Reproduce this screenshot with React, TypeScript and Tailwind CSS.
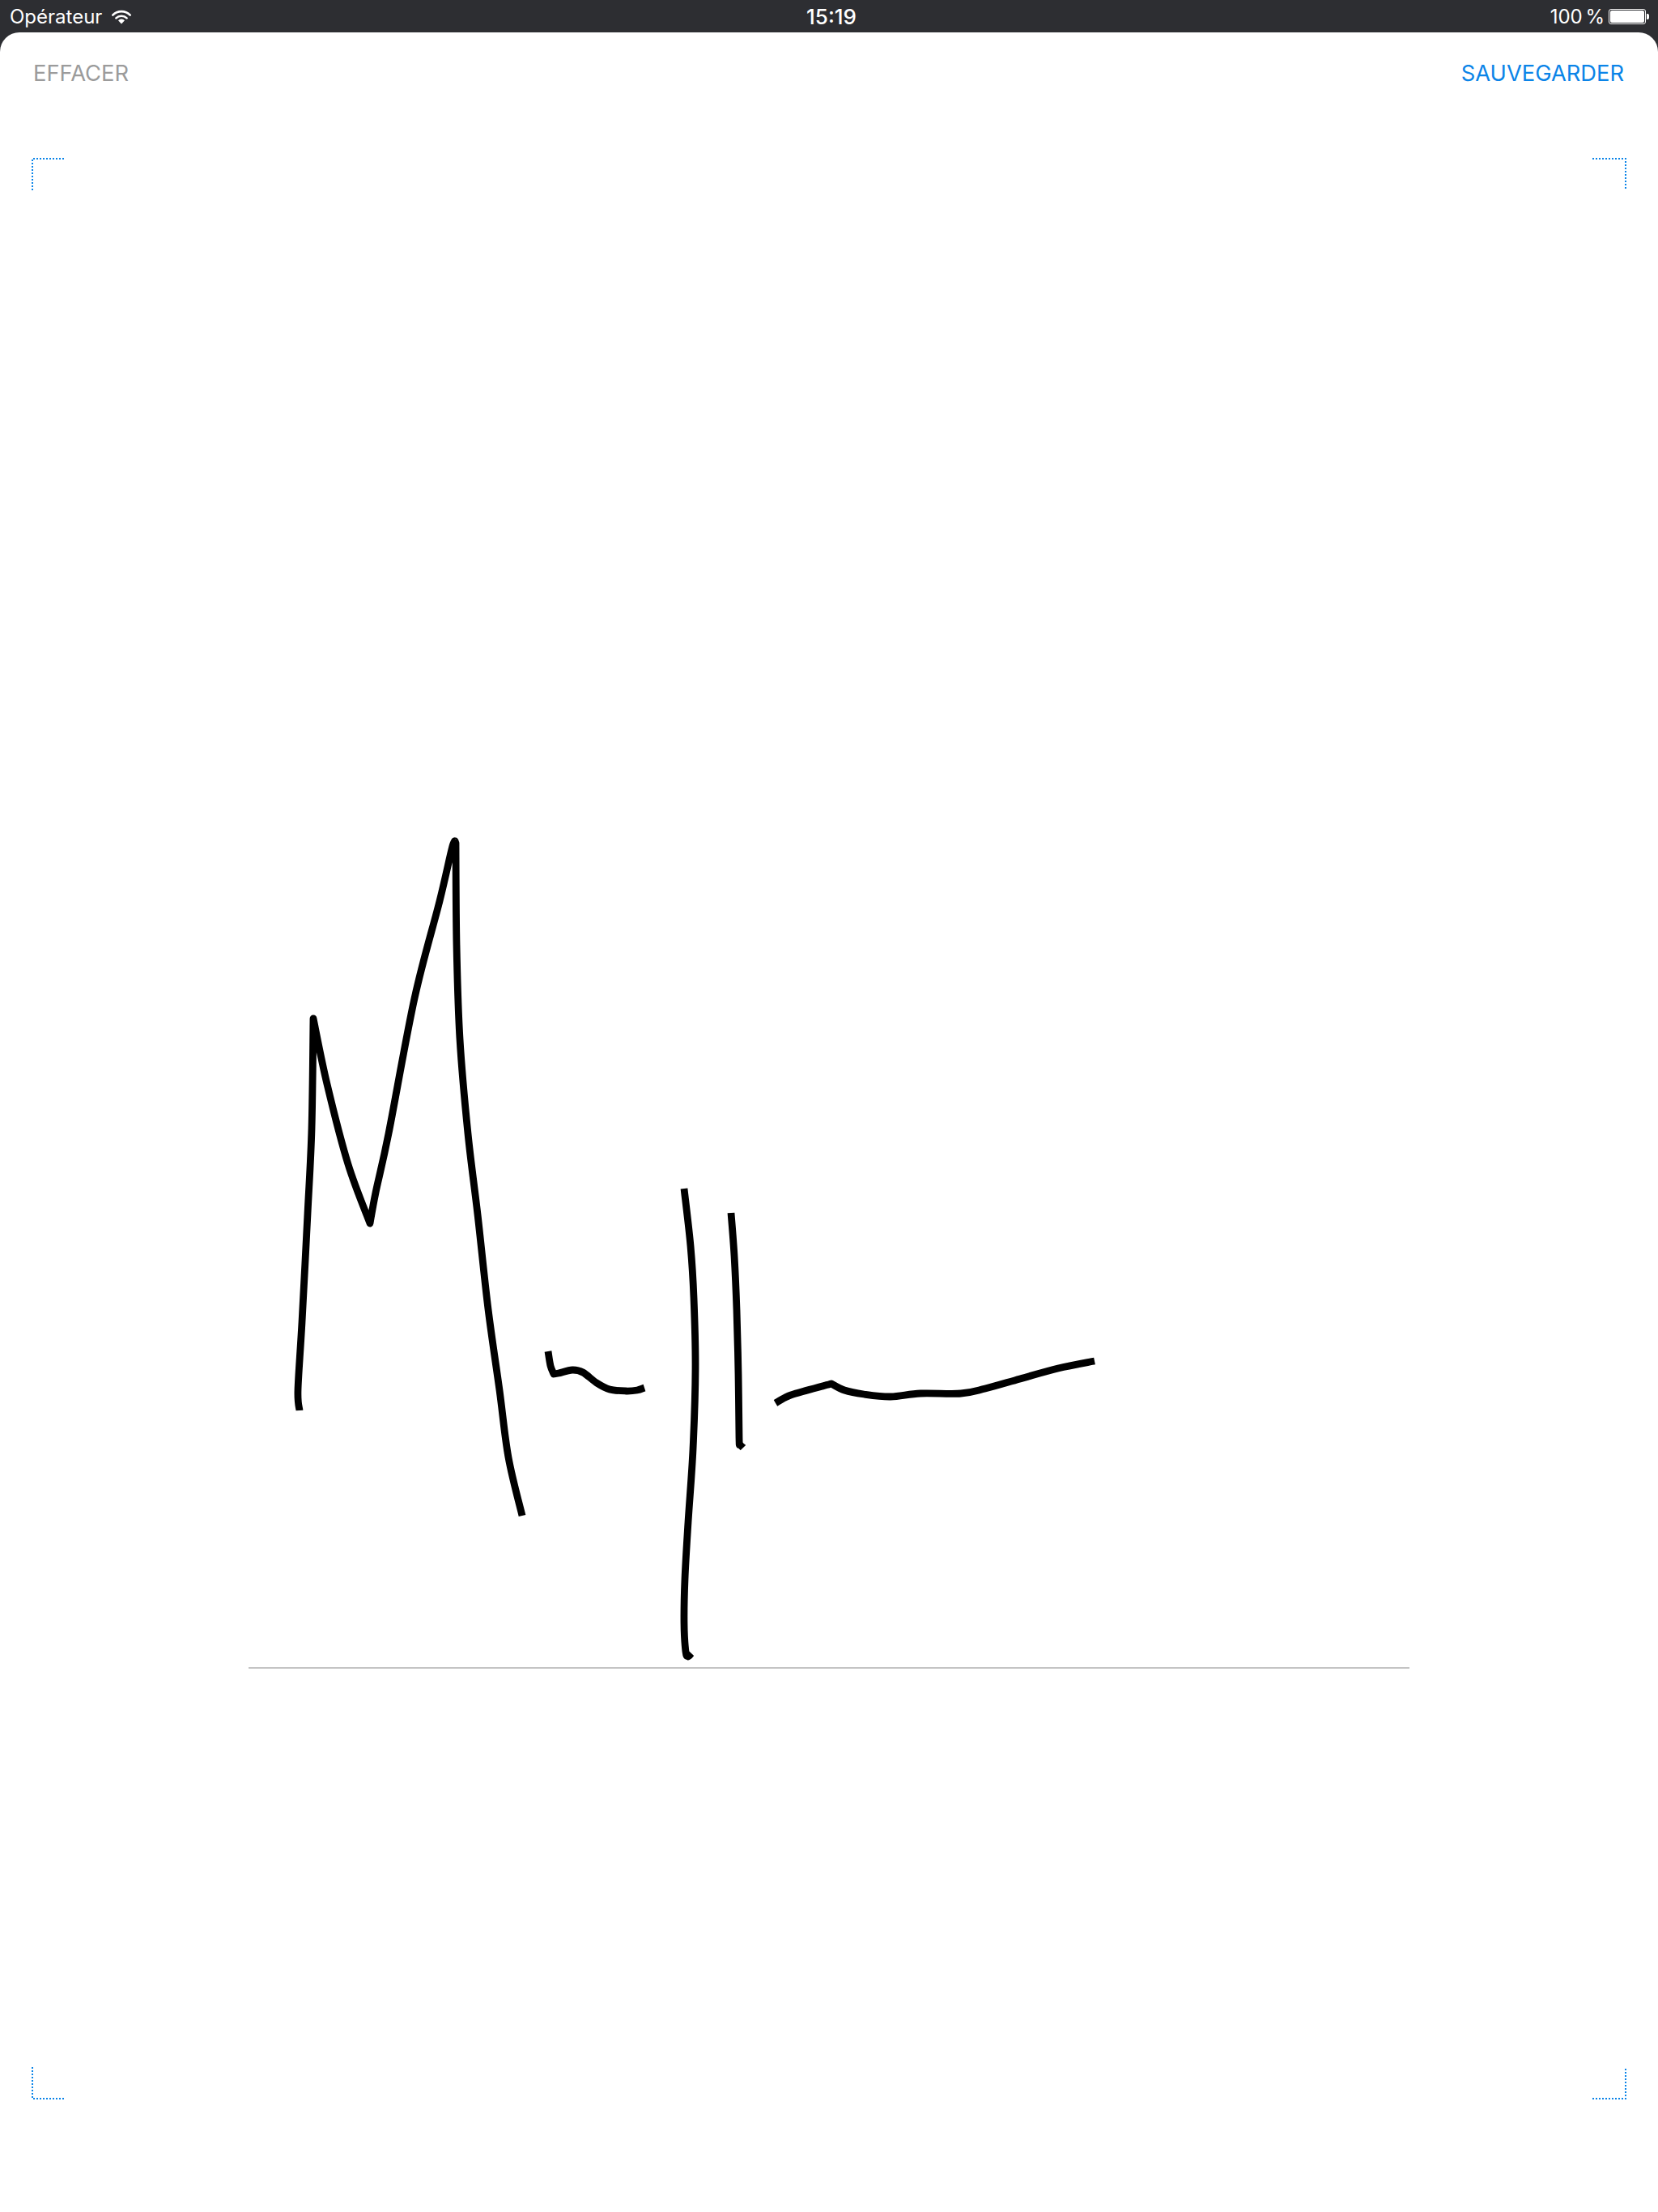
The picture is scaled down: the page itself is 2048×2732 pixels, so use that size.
type Pt = [number, number]

// each stroke is a list of runs, a new run starts at a sharp corner of the pen
const STROKES: Pt[][][] = [
  [
    [[370,1742],[368,1717],[373,1633],[380,1499],[385,1394],[387,1258]],
    [[387,1258],[404,1339],[430,1438],[457,1511]],
    [[457,1511],[464,1473],[480,1400],[512,1233],[543,1113],[559,1045],[563,1041]],
    [[563,1041],[564,1167],[568,1283],[578,1400],[590,1500],[603,1617],[617,1717],[628,1800],[645,1872]],
  ],
  [
    [[677,1669],[680,1687],[684,1697]],
    [[684,1697],[690,1696],[707,1692],[720,1695],[737,1708],[753,1716],[773,1718],[787,1717],[796,1714]],
  ],
  [[[845,1468],[853,1539],[857,1603],[859,1690],[856,1790],[850,1880],[846,1950],[845,2005],[847,2040],[850,2046],[854,2042]]],
  [[[903,1498],[907,1551],[910,1618],[912,1697],[913,1776],[914,1784],[918,1788]]],
  [
    [[958,1733],[970,1726],[983,1721],[1027,1709]],
    [[1027,1709],[1043,1717],[1067,1722],[1100,1725],[1137,1721],[1187,1721],[1217,1715],[1260,1703],[1307,1690],[1352,1681]],
  ],
]

// catmull-rom through the sampled points, corners stay sharp between runs
function smooth(runs: Pt[][]) {
  let d = `M${runs[0][0][0]} ${runs[0][0][1]}`
  for (const pts of runs) {
    for (let i = 0; i < pts.length - 1; i++) {
      const a = pts[Math.max(i - 1, 0)]
      const b = pts[i]
      const c = pts[i + 1]
      const e = pts[Math.min(i + 2, pts.length - 1)]
      const k = 1 / 6
      d += ` C${b[0] + (c[0] - a[0]) * k} ${b[1] + (c[1] - a[1]) * k} ${c[0] - (e[0] - b[0]) * k} ${c[1] - (e[1] - b[1]) * k} ${c[0]} ${c[1]}`
    }
  }
  return d
}

function Corner({ d }: { d: string }) {
  return (
    <svg width="42" height="40" viewBox="0 0 42 40" fill="none">
      <path d={d} stroke="#0a84e8" strokeWidth="2" strokeDasharray="2 2" shapeRendering="crispEdges" />
    </svg>
  )
}

function Wifi() {
  return (
    <svg width="24" height="18" viewBox="0 0 24 18" fill="none" className="ml-[12px] mt-[1px]">
      <path d="M1.3 6.6A15 15 0 0 1 22.7 6.6" stroke="white" strokeWidth="2.6" strokeLinecap="round" />
      <path d="M5.4 10.4A9.4 9.4 0 0 1 18.6 10.4" stroke="white" strokeWidth="2.6" strokeLinecap="round" />
      <path d="M12 17.5 8 13.2A5.6 5.6 0 0 1 16 13.2Z" fill="white" />
    </svg>
  )
}

function Battery() {
  return (
    <div className="flex items-center ml-[5px] mt-[1px]">
      <div className="w-[46px] h-[19px] rounded-[3px] border border-white p-[1px]">
        <div className="w-full h-full rounded-[2px] bg-white" />
      </div>
      <div className="w-[3px] h-[7px] ml-[1px] rounded-r-[2px] bg-white" />
    </div>
  )
}

export default function App() {
  return (
    <div className="w-[2048px] h-[2732px] bg-[#2d2e32] flex flex-col font-['Inter',sans-serif] overflow-hidden">
      <div className="h-[40px] shrink-0 grid grid-cols-3 items-center text-white text-[24px] pl-[12px] pr-[11px]">
        <div className="flex items-center">
          <span className="mt-[2px]">Opérateur</span>
          <Wifi />
        </div>
        <div className="text-center font-medium text-[26px] ml-[5px] mt-[1px]">15:19</div>
        <div className="flex items-center justify-end">
          <span className="mt-[2px] [word-spacing:-3px]">100 %</span>
          <Battery />
        </div>
      </div>
      <div className="flex-1 relative bg-white rounded-t-[24px] flex flex-col">
        <div className="h-[155px] shrink-0 flex justify-between pl-[41px] pr-[42px] pt-[34px] text-[27.3px] leading-[34px]">
          <span className="text-[#9b9b9b]">EFFACER</span>
          <span className="text-[#0a84e8]">SAUVEGARDER</span>
        </div>
        <div className="h-[2398px] mx-[39px] flex flex-col">
          <div className="flex justify-between">
            <Corner d="M1 40V1H42" />
            <Corner d="M0 1H41V40" />
          </div>
          <div className="flex-1 pt-[1824px] pl-[268px]">
            <div className="w-[1434px] h-[2px] bg-[#c4c4c4]" />
          </div>
          <div className="flex justify-between">
            <Corner d="M1 0V39H42" />
            <Corner d="M0 39H41V0" />
          </div>
        </div>
        <svg width="2048" height="2692" viewBox="0 40 2048 2692" fill="none" className="absolute left-0 top-0">
          {STROKES.map((s, i) => (
            <path key={i} d={smooth(s)} stroke="black" strokeWidth="8.8" strokeLinejoin="round" />
          ))}
        </svg>
      </div>
    </div>
  )
}
